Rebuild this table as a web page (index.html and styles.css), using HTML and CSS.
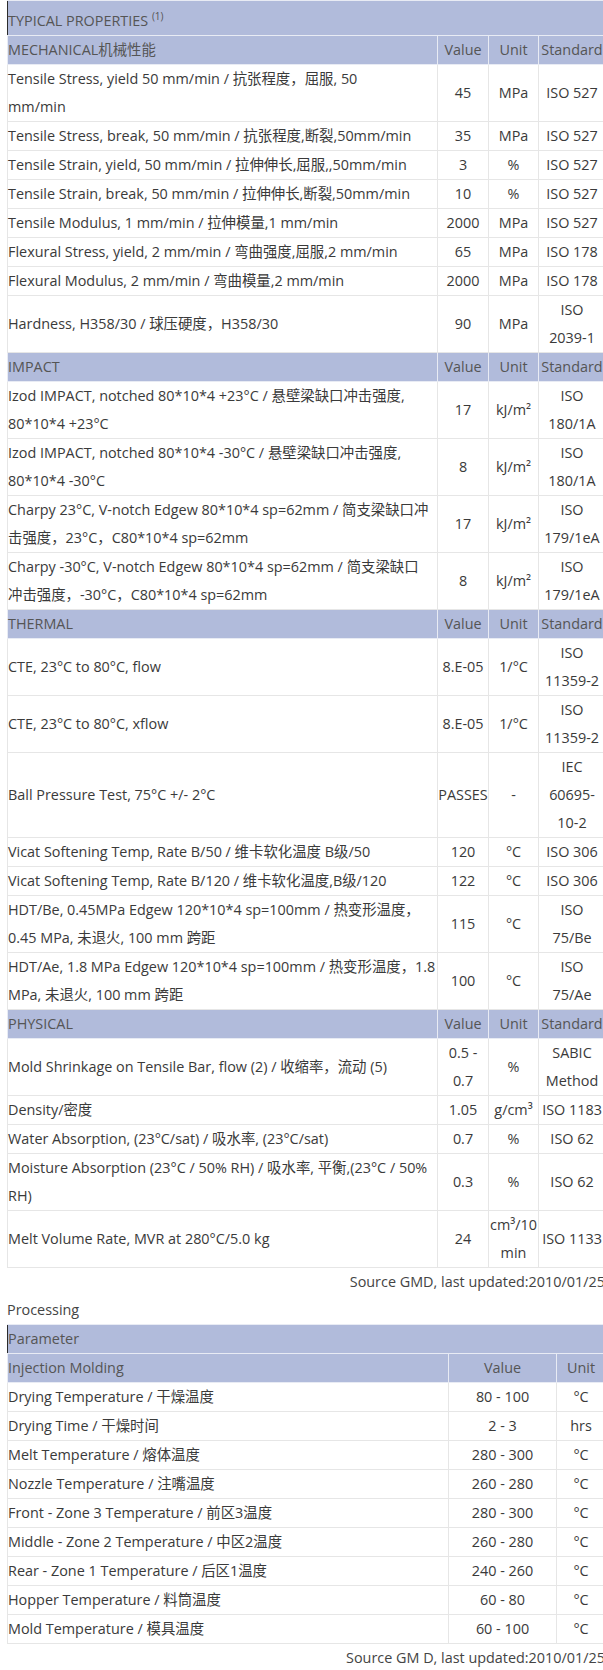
FILE: index.html
```html
<!DOCTYPE html>
<html lang="zh">
<head>
  <meta charset="UTF-8">
  <meta name="viewport" content="width=device-width, initial-scale=1.0">
  <title>Typical Properties</title>
  <link rel="stylesheet" href="styles.css">
</head>
<body>
  <div class="sheet">
    <table class="props">
      <colgroup>
        <col class="c-name">
        <col class="c-value">
        <col class="c-unit">
        <col class="c-std">
      </colgroup>
      <tr class="title">
        <td colspan="4">TYPICAL PROPERTIES <sup>(1)</sup></td>
      </tr>

      <tr class="head">
        <td>MECHANICAL机械性能</td><td>Value</td><td>Unit</td><td>Standard</td>
      </tr>
      <tr><td>Tensile Stress, yield 50 mm/min / 抗张程度，屈服, 50<br>mm/min</td><td>45</td><td>MPa</td><td>ISO 527</td></tr>
      <tr><td>Tensile Stress, break, 50 mm/min / 抗张程度,断裂,50mm/min</td><td>35</td><td>MPa</td><td>ISO 527</td></tr>
      <tr><td>Tensile Strain, yield, 50 mm/min / 拉伸伸长,屈服,,50mm/min</td><td>3</td><td>%</td><td>ISO 527</td></tr>
      <tr><td>Tensile Strain, break, 50 mm/min / 拉伸伸长,断裂,50mm/min</td><td>10</td><td>%</td><td>ISO 527</td></tr>
      <tr><td>Tensile Modulus, 1 mm/min / 拉伸模量,1 mm/min</td><td>2000</td><td>MPa</td><td>ISO 527</td></tr>
      <tr><td>Flexural Stress, yield, 2 mm/min / 弯曲强度,屈服,2 mm/min</td><td>65</td><td>MPa</td><td>ISO 178</td></tr>
      <tr><td>Flexural Modulus, 2 mm/min / 弯曲模量,2 mm/min</td><td>2000</td><td>MPa</td><td>ISO 178</td></tr>
      <tr><td>Hardness, H358/30 / 球压硬度，H358/30</td><td>90</td><td>MPa</td><td>ISO 2039-1</td></tr>

      <tr class="head">
        <td>IMPACT</td><td>Value</td><td>Unit</td><td>Standard</td>
      </tr>
      <tr><td>Izod IMPACT, notched 80*10*4 +23°C / 悬壁梁缺口冲击强度, 80*10*4 +23°C</td><td>17</td><td>kJ/m²</td><td>ISO 180/1A</td></tr>
      <tr><td>Izod IMPACT, notched 80*10*4 -30°C / 悬壁梁缺口冲击强度, 80*10*4 -30°C</td><td>8</td><td>kJ/m²</td><td>ISO 180/1A</td></tr>
      <tr><td>Charpy 23°C, V-notch Edgew 80*10*4 sp=62mm / 简支梁缺口冲击强度，23°C，C80*10*4 sp=62mm</td><td>17</td><td>kJ/m²</td><td>ISO 179/1eA</td></tr>
      <tr><td>Charpy -30°C, V-notch Edgew 80*10*4 sp=62mm / 简支梁缺口<br>冲击强度，-30°C，C80*10*4 sp=62mm</td><td>8</td><td>kJ/m²</td><td>ISO 179/1eA</td></tr>

      <tr class="head">
        <td>THERMAL</td><td>Value</td><td>Unit</td><td>Standard</td>
      </tr>
      <tr><td>CTE, 23°C to 80°C, flow</td><td>8.E-05</td><td>1/°C</td><td>ISO 11359-2</td></tr>
      <tr><td>CTE, 23°C to 80°C, xflow</td><td>8.E-05</td><td>1/°C</td><td>ISO 11359-2</td></tr>
      <tr><td>Ball Pressure Test, 75°C +/- 2°C</td><td>PASSES</td><td>-</td><td>IEC 60695-10-2</td></tr>
      <tr><td>Vicat Softening Temp, Rate B/50 / 维卡软化温度 B级/50</td><td>120</td><td>°C</td><td>ISO 306</td></tr>
      <tr><td>Vicat Softening Temp, Rate B/120 / 维卡软化温度,B级/120</td><td>122</td><td>°C</td><td>ISO 306</td></tr>
      <tr><td>HDT/Be, 0.45MPa Edgew 120*10*4 sp=100mm / 热变形温度，0.45 MPa, 未退火, 100 mm 跨距</td><td>115</td><td>°C</td><td>ISO 75/Be</td></tr>
      <tr><td>HDT/Ae, 1.8 MPa Edgew 120*10*4 sp=100mm / 热变形温度，1.8 MPa, 未退火, 100 mm 跨距</td><td>100</td><td>°C</td><td>ISO 75/Ae</td></tr>

      <tr class="head">
        <td>PHYSICAL</td><td>Value</td><td>Unit</td><td>Standard</td>
      </tr>
      <tr><td>Mold Shrinkage on Tensile Bar, flow (2) / 收缩率，流动 (5)</td><td>0.5 - 0.7</td><td>%</td><td>SABIC Method</td></tr>
      <tr><td>Density/密度</td><td>1.05</td><td>g/cm³</td><td>ISO 1183</td></tr>
      <tr><td>Water Absorption, (23°C/sat) / 吸水率, (23°C/sat)</td><td>0.7</td><td>%</td><td>ISO 62</td></tr>
      <tr><td>Moisture Absorption (23°C / 50% RH) / 吸水率, 平衡,(23°C / 50% RH)</td><td>0.3</td><td>%</td><td>ISO 62</td></tr>
      <tr><td>Melt Volume Rate, MVR at 280°C/5.0 kg</td><td>24</td><td>cm³/10 min</td><td>ISO 1133</td></tr>
    </table>
    <p class="source">Source GMD, last updated:2010/01/25</p>

    <p class="caption">Processing</p>
    <table class="props proc">
      <colgroup>
        <col class="p-name">
        <col class="p-value">
        <col class="p-unit">
      </colgroup>
      <tr class="title">
        <td colspan="3">Parameter</td>
      </tr>
      <tr class="head">
        <td>Injection Molding</td><td>Value</td><td>Unit</td>
      </tr>
      <tr><td>Drying Temperature / 干燥温度</td><td>80 - 100</td><td>°C</td></tr>
      <tr><td>Drying Time / 干燥时间</td><td>2 - 3</td><td>hrs</td></tr>
      <tr><td>Melt Temperature / 熔体温度</td><td>280 - 300</td><td>°C</td></tr>
      <tr><td>Nozzle Temperature / 注嘴温度</td><td>260 - 280</td><td>°C</td></tr>
      <tr><td>Front - Zone 3 Temperature / 前区3温度</td><td>280 - 300</td><td>°C</td></tr>
      <tr><td>Middle - Zone 2 Temperature / 中区2温度</td><td>260 - 280</td><td>°C</td></tr>
      <tr><td>Rear - Zone 1 Temperature / 后区1温度</td><td>240 - 260</td><td>°C</td></tr>
      <tr><td>Hopper Temperature / 料筒温度</td><td>60 - 80</td><td>°C</td></tr>
      <tr><td>Mold Temperature / 模具温度</td><td>60 - 100</td><td>°C</td></tr>
    </table>
    <p class="source">Source GM D, last updated:2010/01/25</p>
  </div>
</body>
</html>
```

FILE: styles.css
```css
body {
  margin: 0;
  font-family: "Open Sans", "Noto Sans CJK SC", sans-serif;
  font-size: 14.4px;
  color: #3a3a3a;
  background: #fff;
  overflow: hidden;
}
.sheet {
  width: 598px;
  padding-left: 7px;
}
.props {
  width: 598px;
  table-layout: fixed;
  border-collapse: collapse;
  border: 1px solid #2b2b2b;
}
.props td {
  padding: 0;
  line-height: 28px;
  border: 1px solid #e6e6e6;
  text-align: center;
  vertical-align: middle;
}
.props td:first-child {
  text-align: left;
}
.props tr:not(.head) td:nth-child(4) {
  padding: 0 3px;
}
.c-name { width: 430px; }
.c-value { width: 51px; }
.c-unit { width: 50px; }
.c-std { width: 67px; }
.p-name { width: 441px; }
.p-value { width: 108px; }
.p-unit { width: 49px; }

.title td,
.head td {
  background: #b1bbdb;
  color: #555;
  border-color: #e8ebf4;
}
.title td {
  padding-top: 6px;
  border-left: none;
  border-right: none;
}
.proc .title td {
  padding-top: 0;
}
.title sup {
  font-size: 10px;
  line-height: 0;
}
.source {
  margin: 0;
  line-height: 28px;
  text-align: right;
  color: #444;
}
.caption {
  margin: 0;
  line-height: 28px;
  color: #444;
}
```
